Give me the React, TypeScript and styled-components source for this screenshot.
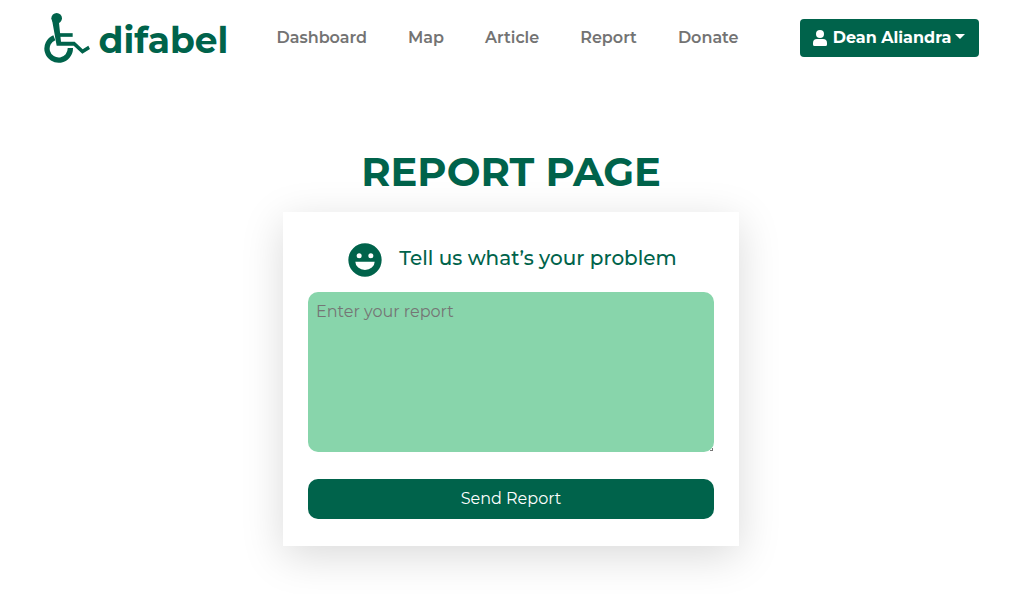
import React from "react";
import styled, { createGlobalStyle } from "styled-components";

const green = "#00634b";

const GlobalStyle = createGlobalStyle`
  *, *::before, *::after { box-sizing: border-box; }
  body {
    margin: 0;
    background: #fff;
    font-family: Montserrat, Inter, "Liberation Sans", sans-serif;
    font-size: 16px;
    line-height: 24px;
  }
`;

const Container = styled.div`
  max-width: 960px;
  margin: 0 auto;
  padding: 0 13px 0 12px;
`;

const Bar = styled(Container)`
  display: flex;
  align-items: center;
  height: 75px;
`;

const Brand = styled.a`
  display: flex;
  align-items: center;
  gap: 8px;
  width: 184px;
  color: ${green};
  font-size: 36px;
  line-height: 48px;
  font-weight: 700;
  text-decoration: none;
`;

const BrandIcon = styled.svg`
  flex: none;
`;

const BrandName = styled.span`
  padding-top: 4px;
`;

const Links = styled.nav`
  display: flex;
  gap: 41px;
  margin-left: 49px;
`;

const NavLink = styled.a`
  color: #737373;
  font-weight: 600;
  text-decoration: none;
`;

const UserButton = styled.button`
  display: flex;
  align-items: center;
  justify-content: center;
  width: 179px;
  height: 38px;
  margin-left: auto;
  padding: 0;
  border: 0;
  border-radius: 4px;
  background: ${green};
  color: #fff;
  font: inherit;
  font-weight: 700;
  white-space: nowrap;
`;

const UserName = styled.span`
  margin: 0 4px 0 6px;
`;

const Caret = styled.span`
  margin-bottom: 2px;
  border: 5px solid transparent;
  border-top-color: #fff;
  border-bottom: 0;
`;

const Main = styled(Container).attrs({ as: "main" })`
  display: flex;
  flex-direction: column;
  align-items: center;
  padding-top: 73px;
  padding-bottom: 48px;
`;

const Title = styled.h1`
  margin: 0 0 16px;
  color: ${green};
  font-size: 40px;
  line-height: 48px;
  font-weight: 700;
`;

const Card = styled.form`
  display: flex;
  flex-direction: column;
  width: 100%;
  max-width: 456px;
  padding: 28px 25px 27px;
  background: #fff;
  box-shadow: 0 10px 40px rgba(0, 0, 0, 0.15);
`;

const Prompt = styled.label`
  display: flex;
  justify-content: center;
  gap: 14px;
  margin-bottom: 12px;
  color: ${green};
  font-size: 20px;
  line-height: 36px;
  font-weight: 500;
`;

const ReportField = styled.textarea`
  display: block;
  width: 100%;
  height: 160px;
  margin-bottom: 27px;
  padding: 8px;
  border: 0;
  border-radius: 10px;
  background: #88d5ab;
  color: #212529;
  font: inherit;
  resize: vertical;
  &::placeholder { color: #757575; }
  &::-webkit-resizer {
    background: linear-gradient(135deg, transparent 50%, #777 50%) right 1px bottom 1px / 3px 3px no-repeat;
  }
`;

const SendButton = styled.button`
  height: 40px;
  border: 0;
  border-radius: 10px;
  background: ${green};
  color: #fff;
  font: inherit;
`;

const Wheelchair = () => (
  <BrandIcon width="47" height="50" viewBox="42 38 141 150" fill="none" stroke={green} aria-hidden="true">
    <circle cx="80" cy="54" r="16" fill={green} stroke="none" />
    <path d="M66 58 L86 58 L93 124 H134 L158 147 L175 136 L180 146 L157 160 L131 136 H80 Z" fill={green} stroke="none" />
    <path d="M90 104 H128" strokeWidth="11" />
    <path d="M73 112 A35 35 0 1 0 121 143" strokeWidth="16" />
  </BrandIcon>
);

const Person = () => (
  <svg width="14" height="16" viewBox="0 0 14 16" fill="#fff" aria-hidden="true">
    <circle cx="7" cy="4" r="4" />
    <path d="M4 9h6a4 4 0 0 1 4 4v1.500a1.500 1.500 0 0 1-1.500 1.500h-11A1.500 1.500 0 0 1 0 14.500V13a4 4 0 0 1 4-4z" />
  </svg>
);

const Smile = () => (
  <svg width="40" height="40" viewBox="0 0 24 24" fill={green} aria-hidden="true">
    <path fillRule="evenodd" d="M12 2a10 10 0 1 0 0 20 10 10 0 0 0 0-20zM8.500 8a1.500 1.500 0 1 1 0 3 1.500 1.500 0 0 1 0-3zM15.500 8a1.500 1.500 0 1 1 0 3 1.500 1.500 0 0 1 0-3zM6.200 13h11.600a5.800 5 0 0 1-11.600 0z" />
  </svg>
);

const pages = ["Dashboard", "Map", "Article", "Report", "Donate"];

export default function App() {
  return (
    <>
      <GlobalStyle />
      <header>
        <Bar>
          <Brand href="#"><Wheelchair /><BrandName>difabel</BrandName></Brand>
          <Links>
            {pages.map((page) => <NavLink key={page} href="#">{page}</NavLink>)}
          </Links>
          <UserButton type="button"><Person /><UserName>Dean Aliandra</UserName><Caret /></UserButton>
        </Bar>
      </header>
      <Main>
        <Title>REPORT PAGE</Title>
        <Card>
          <Prompt htmlFor="report"><Smile />Tell us what’s your problem</Prompt>
          <ReportField id="report" placeholder="Enter your report" />
          <SendButton type="button">Send Report</SendButton>
        </Card>
      </Main>
    </>
  );
}
